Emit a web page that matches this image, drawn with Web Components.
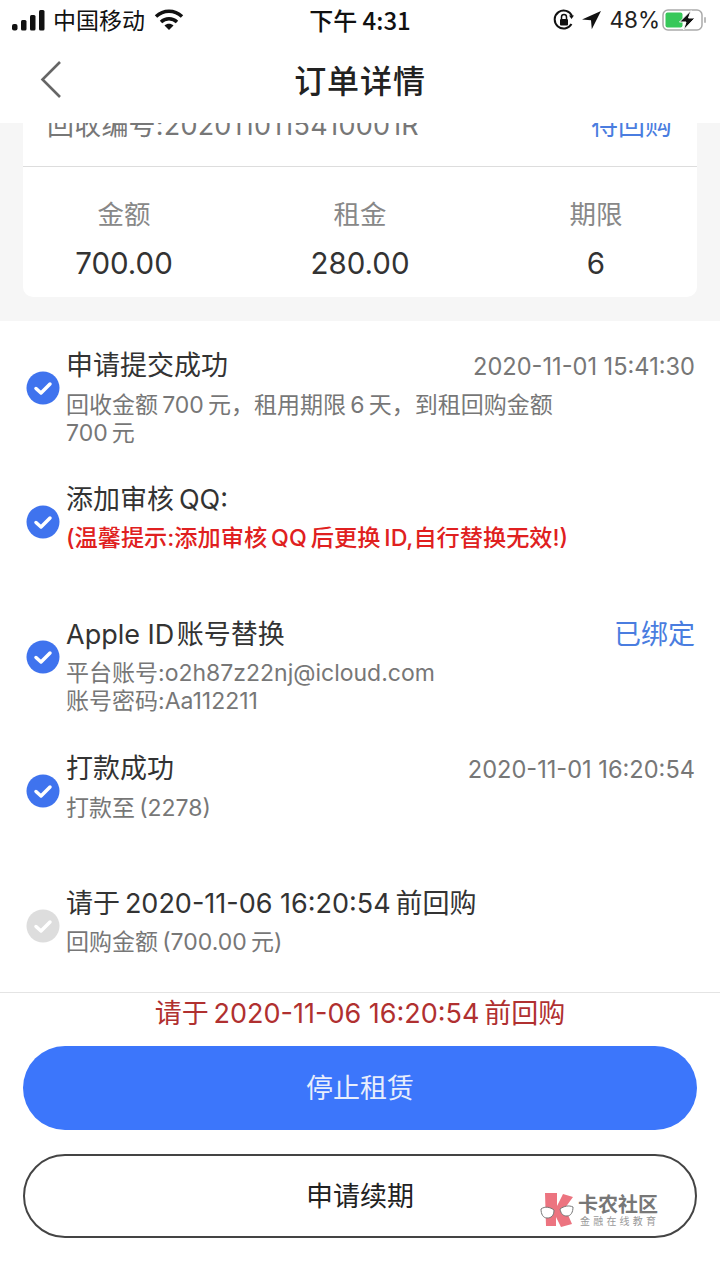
<!DOCTYPE html>
<html><head><meta charset="utf-8">
<style>
html,body{margin:0;padding:0;background:#fff;width:720px;height:1280px;overflow:hidden}
body{font-family:"Inter","Noto Sans CJK SC",sans-serif}
</style></head><body>
<order-page></order-page>
<script>
const FONT='"Inter","Noto Sans CJK SC",sans-serif';
const CJK='"Noto Sans CJK SC",sans-serif';
class StatusBar extends HTMLElement{constructor(){super();this.attachShadow({mode:'open'}).innerHTML=`<style>
:host{display:flex;height:40px;align-items:center;box-sizing:border-box;padding:0 12px 0 12px;position:relative;color:#111;font:23px ${CJK}}
.l,.r{display:flex;align-items:center}.l{gap:8px}.r{margin-left:auto;gap:5px}
.t{position:absolute;left:0;right:0;text-align:center;font-size:24px;font-weight:500;line-height:40px;font-family:${CJK}}
.p{font:22.500px/40px "Inter",sans-serif;color:#222}
</style>
<div class="l"><svg width="33" height="21" viewBox="0 0 33 21"><rect x="0" y="14" width="5.500" height="6.500" rx="2" fill="#111"/><rect x="9" y="10" width="5.500" height="10.500" rx="1.500" fill="#111"/><rect x="18" y="5" width="5.500" height="15.500" rx="1.500" fill="#111"/><rect x="27" y="0" width="5.500" height="20.500" rx="1.500" fill="#111"/></svg><span style="line-height:38px;margin-bottom:2px">中国移动</span><svg style="margin-left:1px" width="30" height="22" viewBox="0 0 30 22"><path d="M2 7.500C9.500 .5 20.500 .5 28 7.500" stroke="#111" stroke-width="3.500" fill="none"/><path d="M7 13C11.500 8.800 18.500 8.800 23 13" stroke="#111" stroke-width="3.500" fill="none"/><path d="M10.500 16.500L15 21l4.500-4.500C17 14.300 13 14.300 10.500 16.500z" fill="#111"/></svg></div>
<div class="t">下午 4:31</div>
<div class="r"><svg width="22" height="22" viewBox="0 0 22 22"><path d="M18.500 15A9 9 0 1 1 19 7" stroke="#111" stroke-width="2" fill="none"/><path d="M16 6.500h5l-2.500 3.500z" fill="#111"/><rect x="7" y="10" width="8" height="6.500" rx="1" fill="#111"/><path d="M8.500 10V8a2.500 2.500 0 0 1 5 0v2" stroke="#111" stroke-width="1.500" fill="none"/></svg>
<svg style="margin-left:2px" width="20" height="20" viewBox="0 0 20 20"><path d="M19 1L0 9.500l9 .8.800 9z" fill="#111"/></svg>
<span class="p" style="margin-left:2px">48%</span>
<svg width="46" height="24" viewBox="0 0 46 24" style="margin-left:-3px"><rect x="1" y="2" width="39" height="20" rx="5" fill="none" stroke="#aaa" stroke-width="1.500"/><rect x="3.500" y="4.500" width="17" height="15" rx="2" fill="#37c85a"/><path d="M29 2.500L17.500 14H24l-2.500 8L33 10h-6.500z" fill="#111" stroke="#fff" stroke-width="1"/><rect x="42" y="9" width="2" height="6" rx="1" fill="#bbb"/></svg></div>`}}
customElements.define('status-bar',StatusBar);
class NavBar extends HTMLElement{constructor(){super();this.attachShadow({mode:'open'}).innerHTML=`<style>
:host{display:flex;height:83px;align-items:center;justify-content:center;position:relative;background:#fff;font:500 32px/1 ${CJK};color:#222;letter-spacing:.9px;box-sizing:border-box;padding-bottom:6px}
svg{position:absolute;left:40px;top:20px}
</style><svg width="22" height="40" viewBox="0 0 22 40"><path d="M20 2L2.500 19.500 20 37" fill="none" stroke="#666" stroke-width="2.600"/></svg><slot></slot>`}}
customElements.define('nav-bar',NavBar);
class StatCell extends HTMLElement{constructor(){super();this.attachShadow({mode:'open'}).innerHTML=`<style>
:host{display:flex;flex-direction:column;align-items:center;flex:none;width:160px}
.a{font-size:26.500px;line-height:36px;color:#888;margin-top:-1px}
.b{font-size:29.500px;line-height:38px;color:#333;margin-top:12px;font-family:"Inter",sans-serif;}
</style><div class="a"><slot name="k"></slot></div><div class="b"><slot name="v"></slot></div>`}}
customElements.define('stat-cell',StatCell);
class SummaryCard extends HTMLElement{constructor(){super();this.attachShadow({mode:'open'}).innerHTML=`<style>
:host{display:block;background:#f6f6f6;padding:0 23px 24px;height:198px;box-sizing:border-box;overflow:hidden}
.c{background:#fff;border-radius:0 0 10px 10px;height:174px;overflow:hidden;display:flex;flex-direction:column;box-sizing:border-box}
.top{height:44px;border-bottom:1px solid #ddd;padding:0 25px 0 24px;display:flex;justify-content:space-between;flex:none;font-size:27px;line-height:30px;color:#777;box-sizing:border-box}
.top>div{margin-top:-12px}.st{color:#4a7de0;font-size:27px}
.s{display:flex;justify-content:space-between;margin:30px 0 0;padding:0 21px}
</style><div class="c"><div class="top"><div style="letter-spacing:.2px">回收编号:2020110115410001R</div><div class="st">待回购</div></div>
<div class="s"><slot></slot></div></div>`}}
customElements.define('summary-card',SummaryCard);
class StepItem extends HTMLElement{constructor(){super();this.attachShadow({mode:'open'}).innerHTML=`<style>
:host{display:grid;grid-template-columns:34px 1fr;column-gap:6px;align-items:start;padding-left:26px;padding-right:25px;box-sizing:border-box;height:134.400px}
svg{display:block;margin-top:24px}
.h{display:flex;justify-content:space-between;align-items:baseline;color:#333;font-size:27px;line-height:38px}
.d{color:#777;font-size:23px;line-height:28px;margin-top:5px}
</style><svg width="34" height="34" viewBox="0 0 34 34"><circle cx="17" cy="17" r="16.500" fill="var(--c,#3f73ee)"/><path d="M10 17.500l5 4.500 9-9" fill="none" stroke="#fff" stroke-width="3.500" stroke-linecap="round" stroke-linejoin="round"/></svg>
<div><div class="h"><slot name="t"></slot><slot name="r"></slot></div><div class="d"><slot name="d"></slot></div></div>`}}
customElements.define('step-item',StepItem);
class PillButton extends HTMLElement{constructor(){super();this.attachShadow({mode:'open'}).innerHTML=`<style>
:host{display:flex;align-items:center;justify-content:center;height:84px;border-radius:42px;box-sizing:border-box;font-size:27px;padding-bottom:3px}
:host([primary]){background:#3c76fb;color:#e8eefc}
:host(:not([primary])){border:2px solid #444;color:#222}
</style><slot></slot>`}}
customElements.define('pill-button',PillButton);
class Watermark extends HTMLElement{constructor(){super();this.attachShadow({mode:'open'}).innerHTML=`<style>
:host{position:absolute;left:540px;top:1192px;display:flex;gap:4px;align-items:center;color:#777;font-family:${CJK}}
.a{font-size:20px;font-weight:700;line-height:22px;letter-spacing:0}.b{font-size:10px;line-height:13px;letter-spacing:3.200px;color:#999;margin:-1px 0 0 2px}
</style><svg width="34" height="36" viewBox="0 0 34 36"><path d="M5 1h12v13l6-12 10 3-8 11 7 16-11 3-5-10v9H6z" fill="#ec7480"/><path d="M1 17c4-3 9-2 13 1 0 6-3 8-7 8s-6-4-6-9zM33 15c-4-2-9-1-13 2 1 5 3 7 7 7s6-4 6-9z" fill="#fff" stroke="#777" stroke-width="1"/></svg><div><div class="a">卡农社区</div><div class="b">金融在线教育</div></div>`}}
customElements.define('water-mark',Watermark);
class OrderPage extends HTMLElement{constructor(){super();this.attachShadow({mode:'open'}).innerHTML=`<style>
:host{display:block;width:720px;height:1280px;position:relative;background:#fff;overflow:hidden;font-family:${FONT}}
.steps{display:flex;flex-direction:column;padding-top:26px}
.foot{border-top:1px solid #e4e4e4;position:absolute;left:0;right:0;top:992px;padding:0 23px}
.warn{text-align:center;color:#b03030;font-size:27px;line-height:42px;height:53px}
.g{display:flex;flex-direction:column;gap:24px}
.time{color:#777;font-size:23.600px}
.blue{color:#4a7de0;font-size:27px}
.red{color:#e02020;font-size:23.200px;font-weight:500}
[slot=v],[slot=k]{display:block}
</style>
<status-bar></status-bar><nav-bar>订单详情</nav-bar>
<summary-card><stat-cell><span slot="k">金额</span><span slot="v">700.00</span></stat-cell><stat-cell><span slot="k">租金</span><span slot="v">280.00</span></stat-cell><stat-cell><span slot="k">期限</span><span slot="v">6</span></stat-cell></summary-card>
<div class="steps">
<step-item><span slot="t">申请提交成功</span><span slot="r" class="time">2020-11-01 15:41:30</span><span slot="d">回收金额&#8201;700&#8201;元，租用期限&#8201;6&#8201;天，到租回购金额<br>700&#8201;元</span></step-item>
<step-item><span slot="t">添加审核&#8201;QQ:</span><span slot="d" class="red">(温馨提示:添加审核&#8201;QQ&#8201;后更换&#8201;ID,自行替换无效!)</span></step-item>
<step-item><span slot="t">Apple ID&#8202;账号替换</span><span slot="r" class="blue">已绑定</span><span slot="d">平台账号:o2h87z22nj@icloud.com<br>账号密码:Aa112211</span></step-item>
<step-item><span slot="t">打款成功</span><span slot="r" class="time">2020-11-01 16:20:54</span><span slot="d">打款至&#8201;(2278)</span></step-item>
<step-item style="--c:#ddd"><span slot="t">请于&#8201;2020-11-06 16:20:54&#8201;前回购</span><span slot="d">回购金额&#8201;(700.00&#8201;元)</span></step-item>
</div>
<div class="foot"><div class="warn">请于&#8201;2020-11-06 16:20:54&#8201;前回购</div><div class="g"><pill-button primary>停止租赁</pill-button><pill-button>申请续期</pill-button></div></div>
<water-mark></water-mark>`}}
customElements.define('order-page',OrderPage);
</script></body></html>
